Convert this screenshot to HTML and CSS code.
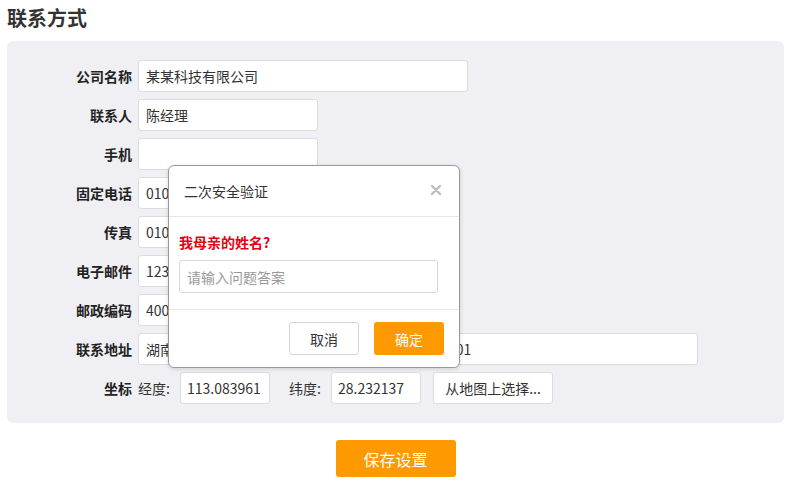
FILE: index.html
```html
<!DOCTYPE html>
<html lang="zh-CN">

<head>
    <meta charset="UTF-8">
    <meta name="viewport" content="width=device-width, initial-scale=1.0">
    <title>联系方式</title>
    <link rel="stylesheet" href="styles.css">
</head>

<body>

    <h1 class="page-title">联系方式</h1>

    <div class="panel">
        <div class="form-row">
            <label class="form-label">公司名称</label>
            <input type="text" class="form-input input-lg" value="某某科技有限公司">
        </div>
        <div class="form-row">
            <label class="form-label">联系人</label>
            <input type="text" class="form-input input-md" value="陈经理">
        </div>
        <div class="form-row">
            <label class="form-label">手机</label>
            <input type="text" class="form-input input-md" value="">
        </div>
        <div class="form-row">
            <label class="form-label">固定电话</label>
            <input type="text" class="form-input input-md" value="010-88886666">
        </div>
        <div class="form-row">
            <label class="form-label">传真</label>
            <input type="text" class="form-input input-md" value="010-88886667">
        </div>
        <div class="form-row">
            <label class="form-label">电子邮件</label>
            <input type="text" class="form-input input-md" value="123456@qq.com">
        </div>
        <div class="form-row">
            <label class="form-label">邮政编码</label>
            <input type="text" class="form-input input-md" value="400000">
        </div>
        <div class="form-row">
            <label class="form-label">联系地址</label>
            <input type="text" class="form-input input-xl" value="湖南省长沙市岳麓区麓谷大道668号科技园三栋-1201">
        </div>
        <div class="form-row">
            <label class="form-label">坐标</label>
            <span class="coord-label">经度:</span>
            <input type="text" class="form-input input-sm" value="113.083961">
            <span class="coord-label coord-gap">纬度:</span>
            <input type="text" class="form-input input-sm" value="28.232137">
            <button class="btn-map">从地图上选择...</button>
        </div>
    </div>

    <div class="actions">
        <button class="btn-save">保存设置</button>
    </div>

    <!-- 二次验证弹窗 -->
    <div class="modal">
        <div class="modal-header">
            <span class="modal-title">二次安全验证</span>
            <svg class="modal-close" width="10" height="10" viewBox="0 0 10 10">
                <path d="M1 1L9 9M9 1L1 9" stroke="#bdbdbd" stroke-width="2.4" stroke-linecap="round" />
            </svg>
        </div>
        <div class="modal-body">
            <div class="question">我母亲的姓名?</div>
            <input type="text" class="answer-input" placeholder="请输入问题答案">
        </div>
        <div class="modal-footer">
            <button class="btn btn-cancel">取消</button>
            <button class="btn btn-ok">确定</button>
        </div>
    </div>

</body>

</html>
```

FILE: styles.css
```css
body {
    font-family: "Noto Sans CJK SC", "Noto Sans", sans-serif;
    color: #333;
    background-color: #fff;
    margin: 0;
    padding: 0 1px 0 7px;
    position: relative;
}

.page-title {
    font-size: 20px;
    font-weight: bold;
    line-height: 26px;
    margin: 0;
    padding: 5px 0 10px 0;
    color: #333;
}

.panel {
    background-color: #f0f0f4;
    border-radius: 6px;
    padding: 19px 0;
    display: flex;
    flex-direction: column;
    gap: 7px;
}

.form-row {
    display: flex;
    align-items: center;
    height: 32px;
}

.form-label {
    width: 125px;
    margin-right: 6px;
    text-align: right;
    font-size: 14px;
    font-weight: bold;
    color: #222;
}

.form-input {
    box-sizing: border-box;
    height: 32px;
    padding: 0 7px;
    border: 1px solid #dcdcdc;
    border-radius: 3px;
    background-color: #fff;
    font-family: inherit;
    font-size: 14px;
    color: #333;
    outline: none;
}

.input-lg {
    width: 330px;
}

.input-md {
    width: 180px;
}

.input-xl {
    width: 560px;
}

.input-sm {
    width: 90px;
    padding: 0 6px;
}

.coord-label {
    font-size: 14px;
    color: #333;
    width: 42px;
    flex-shrink: 0;
}

.coord-gap {
    margin-left: 19px;
}

.btn-map {
    box-sizing: border-box;
    margin-left: 12px;
    width: 120px;
    height: 32px;
    border: 1px solid #dcdcdc;
    border-radius: 3px;
    background-color: #fff;
    font-family: inherit;
    font-size: 14px;
    color: #333;
    cursor: pointer;
}

.actions {
    display: flex;
    justify-content: center;
    padding-top: 17px;
}

.btn-save {
    width: 120px;
    height: 37px;
    border: none;
    border-radius: 3px;
    background-color: #ff9900;
    color: #fff;
    font-family: inherit;
    font-size: 16px;
    cursor: pointer;
}

/* 弹窗 */
.modal {
    position: absolute;
    left: 168px;
    top: 165px;
    width: 292px;
    box-sizing: border-box;
    background-color: #fff;
    border: 1px solid #9a9a9a;
    border-radius: 6px;
    box-shadow: 0 1px 4px rgba(0, 0, 0, 0.15);
}

.modal-header {
    height: 50px;
    display: flex;
    align-items: center;
    justify-content: space-between;
    padding: 0 18px 0 15px;
    border-bottom: 1px solid #e8e8e8;
}

.modal-title {
    font-size: 14px;
    color: #333;
}

.modal-close {
    margin-top: -2px;
}

.modal-body {
    padding: 15px 20px 16px 10px;
    border-bottom: 1px solid #e8e8e8;
}

.question {
    font-size: 14px;
    font-weight: bold;
    color: #e60012;
    line-height: 20px;
    margin-bottom: 8px;
}

.answer-input {
    box-sizing: border-box;
    width: 259px;
    height: 33px;
    padding: 0 7px;
    border: 1px solid #d6d6d6;
    border-radius: 3px;
    font-family: inherit;
    font-size: 14px;
    outline: none;
}

.answer-input::placeholder {
    color: #999;
}

.modal-footer {
    display: flex;
    justify-content: flex-end;
    gap: 15px;
    padding: 12px 15px 12px 0;
}

.btn {
    box-sizing: border-box;
    width: 70px;
    height: 33px;
    border-radius: 3px;
    font-family: inherit;
    font-size: 14px;
    cursor: pointer;
}

.btn-cancel {
    background-color: #fff;
    border: 1px solid #d6d6d6;
    color: #333;
}

.btn-ok {
    background-color: #ff9900;
    border: none;
    color: #fff;
}
```
